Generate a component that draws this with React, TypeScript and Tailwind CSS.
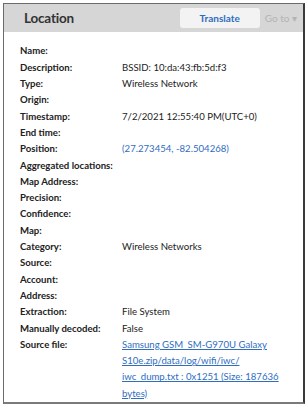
const rows: { label: string; value?: string; kind?: "link" | "blue" }[] = [
  { label: "Name:" },
  { label: "Description:", value: "BSSID: 10:da:43:fb:5d:f3" },
  { label: "Type:", value: "Wireless Network" },
  { label: "Origin:" },
  { label: "Timestamp:", value: "7/2/2021 12:55:40 PM(UTC+0)" },
  { label: "End time:" },
  { label: "Position:", value: "(27.273454, -82.504268)", kind: "blue" },
  { label: "Aggregated locations:" },
  { label: "Map Address:" },
  { label: "Precision:" },
  { label: "Confidence:" },
  { label: "Map:" },
  { label: "Category:", value: "Wireless Networks" },
  { label: "Source:" },
  { label: "Account:" },
  { label: "Address:" },
  { label: "Extraction:", value: "File System" },
  { label: "Manually decoded:", value: "False" },
];

export default function App() {
  return (
    <div className="w-[308px] h-[408px] bg-white p-[3px] font-['Lato',sans-serif]">
      <div className="h-[401px] border border-[#6b6b6b] border-r-[2px] border-b-[2px] border-r-[#3a3a3a] border-b-[#7a7a7a] flex flex-col">
        <div className="h-[34px] bg-[#d6d6d6] flex items-center pl-[20px] pr-[6px]">
          <span className="text-[13.5px] font-bold text-[#333] flex-1 tracking-[-0.2px]">Location</span>
          <button className="w-[80px] h-[20px] rounded-[3px] bg-[#f3f3f3] text-[10px] font-bold text-[#2f6dbf]">Translate</button>
          <span className="ml-[5px] text-[10px] text-[#b4b4b4] whitespace-nowrap">Go to ▾</span>
        </div>
        <div className="pl-[16px] pr-[10px] pt-[11px] text-[9.6px] leading-[16.3px] text-[#222]">
          {rows.map((r) => (
            <div key={r.label} className="flex">
              <span className="w-[102px] shrink-0 font-bold whitespace-nowrap">{r.label}</span>
              <span className={r.kind === "blue" ? "text-[#2f6dbf]" : ""}>{r.value}</span>
            </div>
          ))}
          <div className="flex">
            <span className="w-[102px] shrink-0 font-bold">Source file:</span>
            <span className="text-[#2f6dbf] underline w-[158px]">
              Samsung GSM_SM-G970U Galaxy S10e.zip/data/log/wifi/iwc/ iwc_dump.txt : 0x1251 (Size: 187636 bytes)
            </span>
          </div>
        </div>
      </div>
    </div>
  );
}
